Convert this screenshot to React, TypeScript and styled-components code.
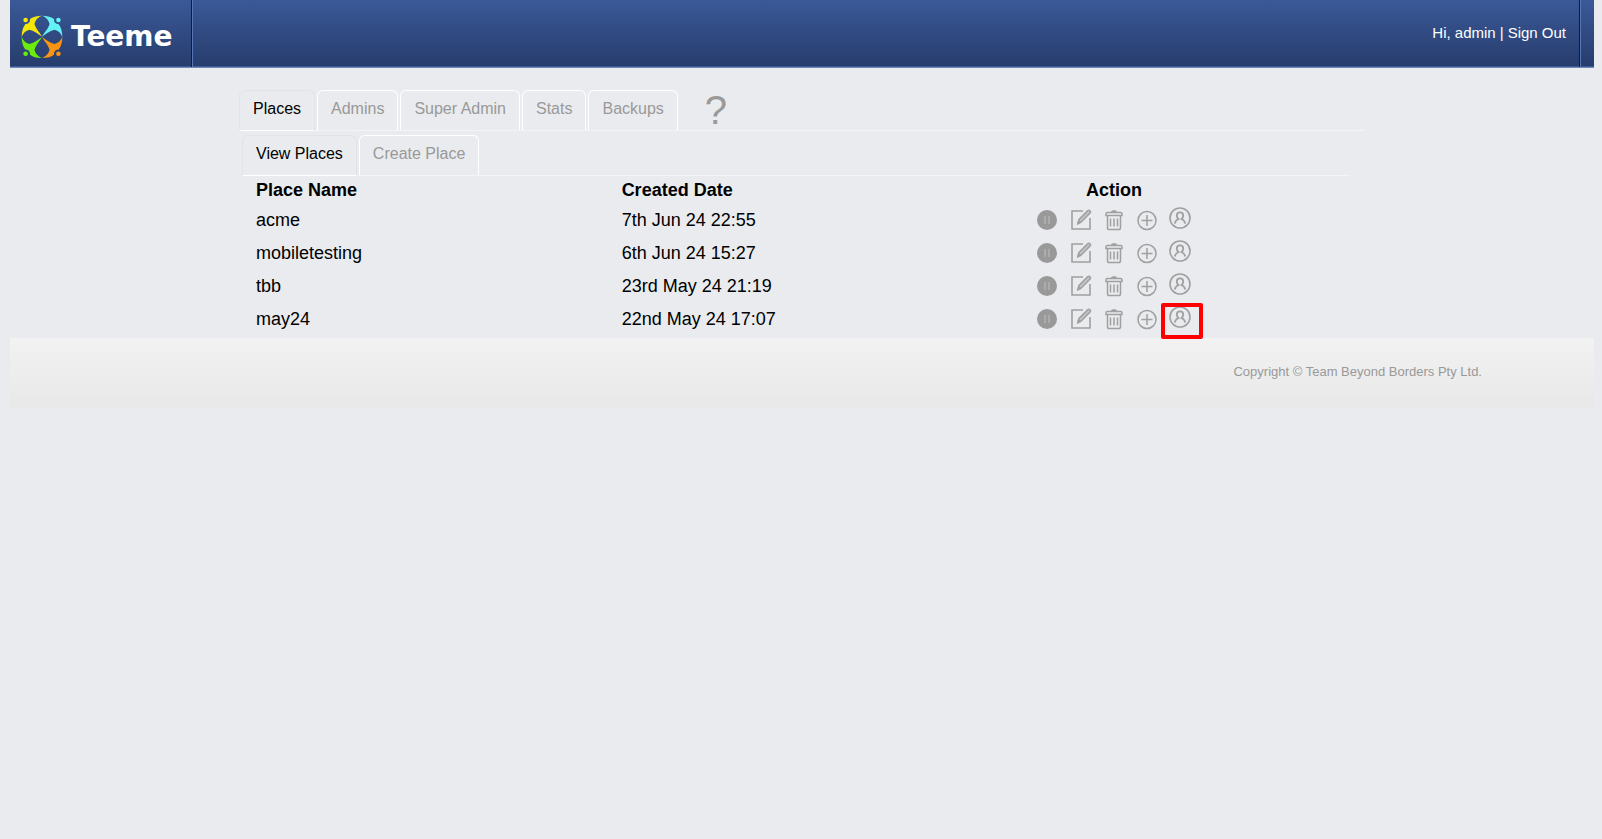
import React from "react";
import styled, { createGlobalStyle } from "styled-components";

const GlobalStyle = createGlobalStyle`
  body {
    margin: 0;
    padding: 0 8px 0 10px;
    background: #e9ebee;
    color: #000;
    font-family: Arial, "Liberation Sans", sans-serif;
    font-size: 16px;
  }
  *, *::before, *::after { box-sizing: border-box; }
  a { color: inherit; text-decoration: none; }
`;

const Header = styled.header`
  display: flex;
  align-items: stretch;
  height: 68px;
  background: linear-gradient(#3b5998, #263c6c);
  border-bottom: 1px solid #6f88b8;
  box-shadow: inset 0 -1px #3f5a94;
  color: #fff;
`;

const Brand = styled.a`
  display: flex;
  align-items: center;
  gap: 8px;
  width: 182px;
  padding: 6px 0 0 11px;
  border-right: 1px solid #0f1c3e;
  box-shadow: 1px 0 #5876b4;
`;

const BrandName = styled.span`
  font: bold 28px/32px "DejaVu Sans", sans-serif;
`;

const Account = styled.div`
  flex: 1;
  display: flex;
  justify-content: flex-end;
  gap: 4px;
  padding: 24px 13px 0 0;
  font-size: 15px;
  line-height: 18px;
`;

const HeaderEnd = styled.div`
  width: 15px;
  border-left: 1px solid #0f1c3e;
  box-shadow: inset 1px 0 #5876b4;
`;

const Main = styled.main`
  width: 100%;
  max-width: 1126px;
  margin: 0 auto;
  padding-top: 22px;
`;

const Section = styled.section`
  padding: 4px 15px 3px 3px;
`;

const TabBar = styled.nav`
  display: flex;
  gap: 2px;
  height: 41px;
  border-bottom: 1px solid #f3f4f6;
`;

const Tab = styled.a<{ $active?: boolean }>`
  height: ${(p) => (p.$active ? 41 : 40)}px;
  padding: 8px 13px 0;
  border: 1px solid ${(p) => (p.$active ? "#e2e3e4" : "#fff")};
  border-bottom: ${(p) => (p.$active ? "1px solid #fff" : "0")};
  border-radius: 6px 6px 0 0;
  color: ${(p) => (p.$active ? "#000" : "#999")};
  line-height: 19px;
  white-space: nowrap;
`;

const Help = styled.a`
  margin-left: 25px;
  color: #999;
  font-size: 40px;
  line-height: 40px;
`;

const Table = styled.table`
  width: 100%;
  table-layout: fixed;
  border-collapse: collapse;
  font-size: 18px;
  line-height: 20px;
`;

const NameCol = styled.col`
  width: 33%;
`;

const ActionCol = styled.col`
  width: 472px;
`;

const HeadCell = styled.th<{ $center?: boolean }>`
  height: 27px;
  padding: ${(p) => (p.$center ? "0" : "0 0 0 14px")};
  text-align: ${(p) => (p.$center ? "center" : "left")};
`;

const Cell = styled.td`
  height: 33px;
  padding: 0 0 0 14px;
`;

const ActionCell = styled.td`
  height: 33px;
  padding: 0;
`;

const Actions = styled.div`
  display: flex;
  align-items: center;
  justify-content: center;
  gap: 11px;
`;

const IconButton = styled.button<{ $raised?: boolean }>`
  position: relative;
  display: flex;
  width: 22px;
  height: 22px;
  padding: 0;
  margin-bottom: ${(p) => (p.$raised ? 4 : 0)}px;
  border: 0;
  background: none;
  color: #a0a0a0;
  cursor: pointer;
`;

const Highlight = styled.span`
  position: absolute;
  inset: -3px -12px -11px -8px;
  border: 4px solid #fe0000;
  border-radius: 2px;
`;

const Footer = styled.footer`
  display: flex;
  justify-content: flex-end;
  height: 70px;
  padding: 26px 112px 0 0;
  background: linear-gradient(#f2f2f2, #e8e8e8);
  color: #999;
  font-size: 13px;
  line-height: 16px;
`;

const figure =
  "M64 66C58 54 45 42 41 27C44 14 54 5 64 2C48 2 34 6 27 13C29 21 22 28 13 28C6 38 2 50 2 67C6 56 14 47 26 45C41 48 53 59 64 66Z";

const Logo = () => (
  <svg width="42" height="44" viewBox="0 0 128 134" aria-hidden="true">
    {[
      { fill: "#f5e70a", t: undefined },
      { fill: "#63f1f3", t: "matrix(-1 0 0 1 128 0)" },
      { fill: "#6cec0c", t: "matrix(1 0 0 -1 0 133)" },
      { fill: "#fb9410", t: "matrix(-1 0 0 -1 128 133)" },
    ].map((p) => (
      <g key={p.fill} fill={p.fill} transform={p.t}>
        <path d={figure} />
        <circle cx="14" cy="15" r="7" />
      </g>
    ))}
  </svg>
);

const iconProps = {
  width: 22,
  height: 22,
  viewBox: "0 0 22 22",
  fill: "none",
  stroke: "currentColor",
  "aria-hidden": true,
} as const;

const PauseIcon = () => (
  <svg {...iconProps}>
    <circle cx="10" cy="11" r="10" fill="#999" stroke="none" />
    <path d="M8 7v8M12 7v8" stroke="#acacad" strokeWidth="2" />
  </svg>
);

const EditIcon = () => (
  <svg {...iconProps} strokeWidth="1.6">
    <path d="M13 2H2v18h18V9" />
    <path
      d="M8 14.500l1-4L17.600 1.900c.8-.8 1.700-.8 2.400-.2.700.7.700 1.600-.1 2.400L11.500 12.700z"
      fill="#c4c5c7"
      strokeWidth="1.500"
    />
    <path d="M8 14.500l.6-2.400 1.600 1.400z" fill="currentColor" />
  </svg>
);

const TrashIcon = () => (
  <svg {...iconProps} strokeWidth="1.5">
    <path d="M3 6.500V5c0-.8.5-1.500 1.300-1.500h13.400c.8 0 1.300.7 1.300 1.500v1.500z" />
    <path d="M8 3.300C8 1.600 9 1.200 11 1.200s3 .4 3 2.100z" fill="currentColor" stroke="none" />
    <path d="M4.500 6.500v12.200c0 1.200.6 1.800 1.700 1.800h9.600c1.100 0 1.700-.6 1.700-1.800V6.500" />
    <path d="M7.500 9.500v8M11 9.500v8M14.500 9.500v8" />
  </svg>
);

const PlusIcon = () => (
  <svg {...iconProps} strokeWidth="1.5">
    <circle cx="11" cy="11.500" r="9" />
    <path d="M5.500 11.500h11M11 6v11" />
  </svg>
);

const UserIcon = () => (
  <svg {...iconProps} strokeWidth="1.6">
    <circle cx="11" cy="11" r="10" />
    <path
      d="M5.800 16.500C6.200 14 7.300 13 9.400 12C8.200 11 7.800 9.800 7.800 8.500C7.800 6.500 9 5.300 11 5.300s3.200 1.200 3.200 3.200c0 1.300-.4 2.500-1.600 3.500c2.100 1 3.200 2 3.600 4.500"
      strokeWidth="1.800"
    />
  </svg>
);

const mainTabs = ["Places", "Admins", "Super Admin", "Stats", "Backups"];
const placeTabs = ["View Places", "Create Place"];

const places = [
  { name: "acme", created: "7th Jun 24 22:55" },
  { name: "mobiletesting", created: "6th Jun 24 15:27" },
  { name: "tbb", created: "23rd May 24 21:19" },
  { name: "may24", created: "22nd May 24 17:07", highlighted: true },
];

export default function App() {
  return (
    <>
      <GlobalStyle />
      <Header>
        <Brand href="#home">
          <Logo />
          <BrandName>Teeme</BrandName>
        </Brand>
        <Account>
          <span>Hi, admin</span>
          <span>|</span>
          <a href="#sign-out">Sign Out</a>
        </Account>
        <HeaderEnd />
      </Header>
      <Main>
        <TabBar aria-label="Administration">
          {mainTabs.map((label, i) => (
            <Tab key={label} href="#tab" $active={i === 0}>
              {label}
            </Tab>
          ))}
          <Help href="#help">?</Help>
        </TabBar>
        <Section>
          <TabBar aria-label="Places">
            {placeTabs.map((label, i) => (
              <Tab key={label} href="#tab" $active={i === 0}>
                {label}
              </Tab>
            ))}
          </TabBar>
          <Table>
            <colgroup>
              <NameCol />
              <col />
              <ActionCol />
            </colgroup>
            <thead>
              <tr>
                <HeadCell>Place Name</HeadCell>
                <HeadCell>Created Date</HeadCell>
                <HeadCell $center>Action</HeadCell>
              </tr>
            </thead>
            <tbody>
              {places.map((place) => (
                <tr key={place.name}>
                  <Cell>{place.name}</Cell>
                  <Cell>{place.created}</Cell>
                  <ActionCell>
                    <Actions>
                      <IconButton aria-label="Suspend"><PauseIcon /></IconButton>
                      <IconButton aria-label="Edit"><EditIcon /></IconButton>
                      <IconButton aria-label="Delete"><TrashIcon /></IconButton>
                      <IconButton aria-label="Add"><PlusIcon /></IconButton>
                      <IconButton aria-label="Manager" $raised>
                        <UserIcon />
                        {place.highlighted && <Highlight />}
                      </IconButton>
                    </Actions>
                  </ActionCell>
                </tr>
              ))}
            </tbody>
          </Table>
        </Section>
      </Main>
      <Footer>Copyright © Team Beyond Borders Pty Ltd.</Footer>
    </>
  );
}
